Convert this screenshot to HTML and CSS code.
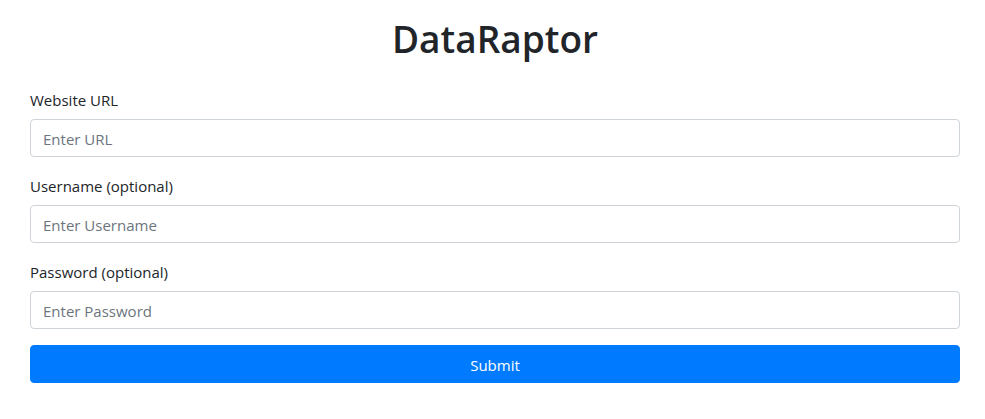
FILE: index.html
```html
<!DOCTYPE html>
<html lang="en">
<head>
<meta charset="utf-8">
<title>DataRaptor</title>
<link rel="stylesheet" href="styles.css">
</head>
<body>
<main class="container">
  <h1 class="title">DataRaptor</h1>
  <form class="form">
    <div class="form-group">
      <label class="label" for="url">Website URL</label>
      <input class="input" id="url" type="text" placeholder="Enter URL">
    </div>
    <div class="form-group">
      <label class="label" for="user">Username (optional)</label>
      <input class="input" id="user" type="text" placeholder="Enter Username">
    </div>
    <div class="form-group">
      <label class="label" for="pass">Password (optional)</label>
      <input class="input" id="pass" type="password" placeholder="Enter Password">
    </div>
    <button class="btn" type="submit">Submit</button>
  </form>
</main>
</body>
</html>
```
FILE: styles.css
```css
* { box-sizing: border-box; }
html, body { margin: 0; padding: 0; background: #fff; }
body {
  font-family: "Open Sans", "Noto Sans", sans-serif;
  font-size: 15px;
  line-height: 24px;
  color: #212529;
}
.container {
  width: 930px;
  margin-left: 30px;
  padding-top: 15px;
}
.title {
  margin: 0 0 24px;
  font-size: 37px;
  font-weight: 600;
  line-height: 48px;
  text-align: center;
}
.form-group { margin-bottom: 16px; }
.label {
  display: block;
  margin-bottom: 8px;
  padding-top: 1px;
  height: 24px;
  font-size: 15px;
  line-height: 24px;
}
.input {
  display: block;
  width: 100%;
  height: 38px;
  padding: 7px 12px 5px;
  font: inherit;
  color: #495057;
  background: #fff;
  border: 1px solid #ced4da;
  border-radius: 4px;
  outline: none;
}
.input::placeholder { color: #6c757d; opacity: 1; }
.btn {
  display: block;
  width: 100%;
  height: 38px;
  padding: 7px 12px 5px;
  font: inherit;
  color: #fff;
  background: #007bff;
  border: 1px solid #007bff;
  border-radius: 4px;
  cursor: pointer;
}
```
